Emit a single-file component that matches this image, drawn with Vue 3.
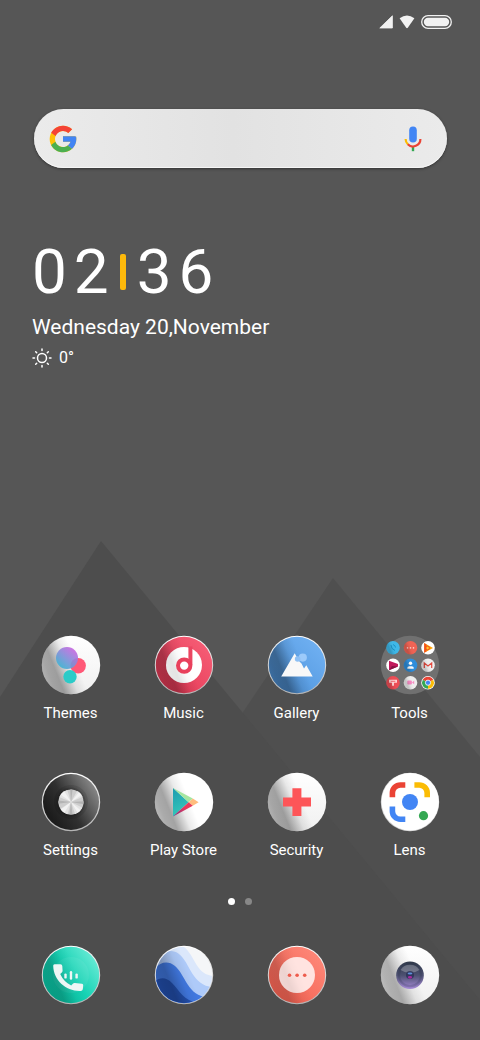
<template>
  <main class="home">
    <svg class="wallpaper" viewBox="0 0 480 520" preserveAspectRatio="none" aria-hidden="true">
      <path d="M333 58 L480 237 V520 H23 Z" fill="#4f4f4f" />
      <path d="M101 21 L480 480 V520 H0 V177 Z" fill="#4d4d4d" />
    </svg>

    <!-- Shared gradients and icon artwork -->
    <svg class="sprite" aria-hidden="true">
      <defs>
        <linearGradient id="shade" x1="0" y1="0.7" x2="0.85" y2="0.36">
          <stop offset="0" stop-color="#000" stop-opacity="0.26" />
          <stop offset="0.14" stop-color="#000" stop-opacity="0.33" />
          <stop offset="0.28" stop-color="#000" stop-opacity="0.36" />
          <stop offset="0.4" stop-color="#000" stop-opacity="0.22" />
          <stop offset="0.52" stop-color="#000" stop-opacity="0.08" />
          <stop offset="0.7" stop-color="#000" stop-opacity="0" />
        </linearGradient>
        <linearGradient id="rim" x1="0" y1="0" x2="0" y2="1">
          <stop offset="0" stop-color="#fff" />
          <stop offset="1" stop-color="#b4b4b4" />
        </linearGradient>
        <linearGradient id="pearl" x1="0" y1="0" x2="0" y2="1">
          <stop offset="0" stop-color="#fff" />
          <stop offset="1" stop-color="#f0f0f0" />
        </linearGradient>
        <linearGradient id="violet" x1="0.8" y1="0" x2="0.1" y2="0.9">
          <stop offset="0" stop-color="#d05fe0" />
          <stop offset="1" stop-color="#36b8d4" />
        </linearGradient>
        <linearGradient id="music-red" x1="0" y1="1" x2="1" y2="0">
          <stop offset="0" stop-color="#e23350" />
          <stop offset="1" stop-color="#f8627a" />
        </linearGradient>
        <linearGradient id="sky" x1="0" y1="1" x2="1" y2="0">
          <stop offset="0" stop-color="#4a90d8" />
          <stop offset="1" stop-color="#74b4f5" />
        </linearGradient>
        <linearGradient id="coal" x1="0.1" y1="0.7" x2="0.9" y2="0.2">
          <stop offset="0" stop-color="#1c1c1c" />
          <stop offset="0.4" stop-color="#303030" />
          <stop offset="1" stop-color="#858585" />
        </linearGradient>
        <linearGradient id="mint" x1="0.1" y1="0.8" x2="0.9" y2="0.2">
          <stop offset="0" stop-color="#08c2a2" />
          <stop offset="0.5" stop-color="#16d2b4" />
          <stop offset="1" stop-color="#62e9d3" />
        </linearGradient>
        <linearGradient id="coral" x1="0" y1="1" x2="1" y2="0">
          <stop offset="0" stop-color="#f25a4a" />
          <stop offset="1" stop-color="#ff8d7e" />
        </linearGradient>
        <linearGradient id="play-teal" x1="0" y1="0" x2="0.3" y2="1">
          <stop offset="0" stop-color="#1d9bb0" />
          <stop offset="1" stop-color="#35c7b9" />
        </linearGradient>
        <linearGradient id="play-red" x1="0" y1="1" x2="1" y2="0">
          <stop offset="0" stop-color="#742a86" />
          <stop offset="0.6" stop-color="#e73a5b" />
        </linearGradient>
        <linearGradient id="lens-glass" x1="0" y1="0" x2="0" y2="1">
          <stop offset="0" stop-color="#303a4a" />
          <stop offset="0.5" stop-color="#4c5070" />
          <stop offset="1" stop-color="#a78bd8" />
        </linearGradient>
        <clipPath id="globe"><circle cx="30" cy="30" r="28.2" /></clipPath>
        <clipPath id="knob"><circle cx="30" cy="30" r="12.6" /></clipPath>

        <symbol id="themes" viewBox="0 0 60 60">
          <circle cx="30" cy="30" r="29.2" fill="url(#pearl)" />
          <circle cx="30" cy="30" r="29.2" fill="url(#shade)" />
          <circle cx="37.2" cy="30.8" r="7.7" fill="#ff5877" />
          <circle cx="26" cy="23" r="11" fill="url(#violet)" fill-opacity="0.9" />
          <circle cx="29" cy="41.8" r="6.7" fill="#2bcbc8" />
        </symbol>

        <symbol id="music" viewBox="0 0 60 60">
          <circle cx="30" cy="30" r="29.2" fill="url(#rim)" />
          <circle cx="30" cy="30" r="28.2" fill="url(#music-red)" />
          <circle cx="30" cy="30" r="28.2" fill="url(#shade)" opacity="0.8" />
          <circle cx="30" cy="30" r="18" fill="#fff" />
          <circle cx="30" cy="30" r="18" fill="url(#shade)" opacity="0.3" />
          <path d="M34.4 11.5 H38.4 V30 H34.4 Z" fill="#eb4661" />
          <circle cx="30.2" cy="30.6" r="6.2" fill="#fff" stroke="#e9405c" stroke-width="4" />
        </symbol>

        <symbol id="gallery" viewBox="0 0 60 60">
          <circle cx="30" cy="30" r="29.2" fill="url(#rim)" />
          <circle cx="30" cy="30" r="28.2" fill="url(#sky)" />
          <circle cx="30" cy="30" r="28.2" fill="url(#shade)" />
          <path d="M14.2 41.4 L27.7 18.2 L29.5 21.5 L31 25 L34.5 28.5 L37 33.4 L39.3 30.3 L45.7 41.4 Z" fill="#f8f8f8" />
          <circle cx="35.8" cy="22.6" r="4.1" fill="#9ccafa" />
          <circle cx="30.6" cy="24" r="2.8" fill="#8dc0f5" />
        </symbol>

        <symbol id="tools" viewBox="0 0 60 60">
          <circle cx="30" cy="30" r="29.2" fill="#707070" />
          <g>
            <circle cx="13" cy="12.7" r="6.8" fill="#3fb8e8" />
            <path d="M11 10 q0 4 4 5.5 M13 9.5 q2.5 1 2.5 3" fill="none" stroke="#1b93c6" stroke-width="1" />
            <circle cx="30.5" cy="12.7" r="6.8" fill="#ef6354" />
            <circle cx="27.5" cy="12.9" r="0.8" fill="#ffd0ca" />
            <circle cx="30.5" cy="12.9" r="0.8" fill="#ffd0ca" />
            <circle cx="33.5" cy="12.9" r="0.8" fill="#ffd0ca" />
            <circle cx="48" cy="12.7" r="6.8" fill="#fff" />
            <path d="M44.2 8 L53 13 L44.2 17.8 Z" fill="#ffa000" />
            <path d="M44.2 8 L46.5 9.4 V16.5 L44.2 17.8 Z" fill="#f4511e" />
            <circle cx="47.6" cy="13" r="1.8" fill="#ffca28" stroke="#f4511e" stroke-width="1" />
          </g>
          <g>
            <circle cx="13" cy="30.3" r="6.8" fill="#fff" />
            <path d="M9 25.8 L18 29 V31.5 L9 35.2 Z" fill="#c2185b" />
            <path d="M9 35.2 L12 31 L18 31.5 Z" fill="#851243" />
            <circle cx="30.5" cy="30.3" r="6.8" fill="#2f8edb" />
            <circle cx="30.5" cy="28.3" r="1.7" fill="#fff" />
            <path d="M27.3 33.8 v-1 q0-1.6 2-1.6 h2.4 q2 0 2 1.6 v1 Z" fill="#fff" />
            <circle cx="48" cy="30.3" r="6.8" fill="#eee" />
            <path d="M44.3 33 V28 L48 31 L51.7 28 V33" fill="none" stroke="#e5483d" stroke-width="1.2" />
          </g>
          <g>
            <circle cx="13" cy="47.7" r="6.8" fill="#ed4e56" />
            <path d="M9 44.7 h8 v3 h-3 v3 h-2 v-3 h-3 Z" fill="#ffd4d4" />
            <path d="M10.7 46.3 h4.6" stroke="#ed4e56" stroke-width="0.8" />
            <circle cx="30.5" cy="47.7" r="6.8" fill="#eee" />
            <rect x="27.3" y="45.5" width="4.6" height="4" rx="1" fill="#f78cc4" />
            <path d="M32 47.5 l2.2-1.7 v3.4 Z" fill="#f78cc4" />
            <circle cx="48" cy="47.7" r="6.8" fill="#fff" />
            <path d="M48 47.7 L42.8 44.7 A6 6 0 0 1 53.2 44.7 Z" fill="#ea4335" />
            <path d="M48 47.7 L53.2 44.7 A6 6 0 0 1 48 53.7 Z" fill="#fbbc05" />
            <path d="M48 47.7 L48 53.7 A6 6 0 0 1 42.8 44.7 Z" fill="#34a853" />
            <circle cx="48" cy="47.7" r="2.6" fill="#4285f4" stroke="#fff" stroke-width="0.8" />
          </g>
          <circle v-for="n in 6" :key="n" :cx="shaded[n - 1][0]" :cy="shaded[n - 1][1]" r="6.8" fill="url(#shade)" opacity="0.5" />
        </symbol>

        <symbol id="settings" viewBox="0 0 60 60">
          <circle cx="30" cy="30" r="29.2" fill="url(#rim)" />
          <circle cx="30" cy="30" r="28" fill="url(#coal)" />
          <circle cx="30" cy="30" r="17" fill="#000" fill-opacity="0.1" />
          <circle cx="30" cy="30" r="14.5" fill="#000" fill-opacity="0.12" />
          <g clip-path="url(#knob)">
            <circle cx="30" cy="30" r="13" fill="#cdcdcd" />
            <path d="M30 30 L16 24 V12 L25 14 Z M30 30 L40 12 L48 22 Z M30 30 L46 38 L36 48 Z M30 30 L25 48 L14 40 Z" fill="#e2e2e2" />
            <path d="M30 30 L16 20 L20 14 Z M30 30 L43 14 L47 19 Z M30 30 L44 42 L40 46 Z M30 30 L20 46 L15 41 Z" fill="#f2f2f2" />
            <path d="M30 30 L29 14 H32 Z M30 30 L48 29 V33 Z M30 30 L28 46 H32 Z M30 30 L14 28 V32 Z" fill="#b4b4b4" />
          </g>
        </symbol>

        <symbol id="play-store" viewBox="0 0 60 60">
          <circle cx="30" cy="30" r="29.2" fill="#fff" />
          <circle cx="30" cy="30" r="29.2" fill="url(#shade)" />
          <path d="M19 16 L34.6 30.3 L19 44.4 Z" fill="url(#play-teal)" />
          <path d="M19 16 L38.8 26.5 L34.6 30.3 Z" fill="#a5e6a0" />
          <path d="M38.8 26.5 L44.6 30.3 L38.8 33.8 L34.6 30.3 Z" fill="#ffbd7e" />
          <path d="M19 44.4 L34.6 30.3 L38.8 33.8 Z" fill="url(#play-red)" />
        </symbol>

        <symbol id="security" viewBox="0 0 60 60">
          <circle cx="30" cy="30" r="29.2" fill="url(#pearl)" />
          <circle cx="30" cy="30" r="29.2" fill="url(#shade)" />
          <path d="M25.4 16.2 H34.4 V25.6 H44 V34.4 H34.4 V44 H25.4 V34.4 H16 V25.6 H25.4 Z" fill="#fd5558" />
        </symbol>

        <symbol id="lens" viewBox="0 0 60 60">
          <circle cx="30" cy="30" r="29.2" fill="#cfcfcf" />
          <circle cx="30.2" cy="29.8" r="28.7" fill="#fff" />
          <g fill="none" stroke-width="5.6">
            <path d="M12.4 25.3 V21 A8 8 0 0 1 20.4 13 H25.3" stroke="#ea4335" />
            <path d="M34.4 13 H39.2 A8 8 0 0 1 47.2 21 V25.3" stroke="#fbbc05" />
            <path d="M12.4 34.4 V39.2 A8 8 0 0 0 20.4 47.2 H25.3" stroke="#4285f4" />
          </g>
          <circle cx="30" cy="30" r="8" fill="#4285f4" />
          <circle cx="43.5" cy="43.7" r="4.6" fill="#34a853" />
        </symbol>

        <symbol id="phone" viewBox="0 0 60 60">
          <circle cx="30" cy="30" r="29.2" fill="url(#rim)" />
          <circle cx="30" cy="30" r="28.2" fill="url(#mint)" />
          <circle cx="30" cy="30" r="18" fill="#fff" fill-opacity="0.06" />
          <circle cx="30" cy="30" r="28.2" fill="url(#shade)" opacity="0.6" />
          <path d="M13.5 19.3 H19.4 Q21.2 19.3 21.3 21 L21.6 25.8 Q21.6 27 20.6 27.8 L19.2 29 Q22.5 36.5 30.2 40.6 L31.6 39 Q32.6 38 33.8 38.1 L41 38.7 Q42.3 38.9 42.2 40.2 L41.8 44.2 Q41.5 45.9 39.7 46 C25 46.5 12.6 35.5 12.2 20.8 Q12.2 19.3 13.5 19.3 Z" fill="#eef6f5" />
          <g stroke="#eef6f5" stroke-width="2.4" stroke-linecap="round">
            <path d="M24.5 29.6 V32.4" />
            <path d="M30 27.3 V33.6" />
            <path d="M35.6 29.6 V32.4" />
          </g>
        </symbol>

        <symbol id="earth" viewBox="0 0 60 60">
          <circle cx="30" cy="30" r="29.2" fill="url(#rim)" />
          <g clip-path="url(#globe)">
            <rect width="60" height="60" fill="#f5f6f8" />
            <path d="M0 8 C12 -2 27 -4 34 6 C42 16 44 30 60 31 V60 H0 Z" fill="#dbe7fb" />
            <path d="M0 15 C8 7 17 3 25 9 C36 17 38 42 60 42 V60 H0 Z" fill="#aecaf9" />
            <path d="M0 24 C6 17 14 15 21 21 C31 29 34 52 54 52 V60 H0 Z" fill="#4179e2" />
            <path d="M0 37 C6 32 12 32 18 38 C25 45 30 56 44 58 V60 H0 Z" fill="#2351b2" />
            <circle cx="30" cy="30" r="28.2" fill="url(#shade)" opacity="0.75" />
          </g>
        </symbol>

        <symbol id="messages" viewBox="0 0 60 60">
          <circle cx="30" cy="30" r="29.2" fill="url(#rim)" />
          <circle cx="30" cy="30" r="28.2" fill="url(#coral)" />
          <circle cx="30" cy="30" r="28.2" fill="url(#shade)" opacity="0.5" />
          <circle cx="30" cy="30" r="18" fill="#ffe3e0" />
          <circle cx="30" cy="30" r="18" fill="url(#shade)" opacity="0.2" />
          <g fill="#ee5c4d">
            <circle cx="22.5" cy="30.3" r="1.8" />
            <circle cx="30.1" cy="30.3" r="1.8" />
            <circle cx="37.7" cy="30.3" r="1.8" />
          </g>
        </symbol>

        <symbol id="camera" viewBox="0 0 60 60">
          <circle cx="30" cy="30" r="29.2" fill="url(#pearl)" />
          <circle cx="30" cy="30" r="29.2" fill="url(#shade)" opacity="0.85" />
          <circle cx="30" cy="30.2" r="13.8" fill="url(#lens-glass)" />
          <circle cx="30" cy="30.2" r="11" fill="none" stroke="#252b48" stroke-opacity="0.2" stroke-width="2" />
          <path d="M20.5 25 A10.5 9 0 0 1 39.5 25 Q30 31 20.5 25 Z" fill="#fff" fill-opacity="0.25" />
          <circle cx="30" cy="30" r="4" fill="#293058" fill-opacity="0.8" />
          <ellipse cx="30" cy="28.5" rx="2.4" ry="1.1" fill="#5f90d8" />
          <ellipse cx="30" cy="32.3" rx="2.2" ry="1.4" fill="#a52a9c" />
        </symbol>
      </defs>
    </svg>

    <header class="status-bar">
      <svg width="14" height="14" viewBox="0 0 14 14" role="img" aria-label="Signal">
        <path d="M13.4 0.8 V13 H0.8 Z" fill="#f2f2f2" stroke="#f2f2f2" stroke-width="0.8" stroke-linejoin="round" />
      </svg>
      <svg width="16" height="14" viewBox="0 0 16 14" role="img" aria-label="Wi-Fi">
        <path d="M0.6 3.2 Q8 -2.4 15.4 3.2 L8.8 12.7 Q8 13.6 7.2 12.7 Z" fill="#f2f2f2" />
      </svg>
      <svg width="31" height="14" viewBox="0 0 31 14" role="img" aria-label="Battery">
        <rect x="0.7" y="0.7" width="29.6" height="12.6" rx="6.3" fill="none" stroke="#f2f2f2" stroke-width="1.3" />
        <rect x="2.8" y="2.8" width="25.4" height="8.4" rx="4.2" fill="#f2f2f2" />
      </svg>
    </header>

    <form class="search" role="search" @submit.prevent>
      <svg width="32" height="32" viewBox="0 0 48 48" aria-hidden="true">
        <path fill="#ffc107" d="M43.6 20.1H42V20H24v8h11.3C33.7 32.7 29.2 36 24 36c-6.6 0-12-5.4-12-12s5.4-12 12-12c3.1 0 5.8 1.2 8 3l5.7-5.7C34 6.1 29.3 4 24 4 13 4 4 13 4 24s9 20 20 20 20-9 20-20c0-1.3-.1-2.6-.4-3.9z" />
        <path fill="#f44336" d="M6.3 14.7l6.6 4.8C14.7 15.1 19 12 24 12c3.1 0 5.8 1.2 8 3l5.7-5.7C34 6.1 29.3 4 24 4 16.3 4 9.7 8.3 6.3 14.7z" />
        <path fill="#4caf50" d="M24 44c5.2 0 9.9-2 13.4-5.2l-6.2-5.2C29.2 35.1 26.7 36 24 36c-5.2 0-9.6-3.3-11.3-8l-6.5 5C9.5 39.6 16.2 44 24 44z" />
        <path fill="#4285f4" d="M43.6 20.1H42V20H24v8h11.3c-.8 2.2-2.2 4.2-4.1 5.6l6.2 5.2C37 39.2 44 34 44 24c0-1.3-.1-2.6-.4-3.9z" />
      </svg>
      <input v-model="query" type="text" aria-label="Search" />
      <button type="button" class="mic" aria-label="Voice search">
        <svg width="18" height="26" viewBox="0 0 18 26" aria-hidden="true">
          <rect x="5.2" y="0.6" width="7.6" height="16" rx="3.8" fill="#4285f4" />
          <path d="M7.8 20 H10.2 V25.2 H7.8 Z" fill="#34a853" />
          <path d="M1.6 13 A7.4 7.4 0 0 0 4 18.4" fill="none" stroke="#fbbc05" stroke-width="2.2" />
          <path d="M3.8 18.3 A7.4 7.4 0 0 0 16.4 13" fill="none" stroke="#ea4335" stroke-width="2.2" />
        </svg>
      </button>
    </form>

    <section class="clock">
      <div class="time">
        <span>0</span>
        <span>2</span>
        <i class="divider"></i>
        <span>3</span>
        <span>6</span>
      </div>
      <div class="date">Wednesday 20,November</div>
      <div class="weather">
        <svg width="20" height="20" viewBox="0 0 20 20" fill="none" stroke="#fff" stroke-width="1.5" stroke-linecap="round" role="img" aria-label="Sunny">
          <circle cx="10" cy="10" r="4.5" />
          <path d="M10 1 V2.5 M10 17.5 V19 M1 10 H2.5 M17.5 10 H19 M3.7 3.7 L4.7 4.7 M15.3 15.3 L16.3 16.3 M3.7 16.3 L4.7 15.3 M15.3 4.7 L16.3 3.7" />
        </svg>
        <span>0°</span>
      </div>
    </section>

    <section class="apps">
      <button v-for="app in apps" :key="app.id" type="button" class="app">
        <svg class="icon" aria-hidden="true"><use :href="'#' + app.id" /></svg>
        <span class="label">{{ app.name }}</span>
      </button>
    </section>

    <nav class="pages" aria-label="Pages">
      <button
        v-for="n in 2"
        :key="n"
        type="button"
        class="dot"
        :class="{ active: page === n }"
        :aria-label="'Page ' + n"
        @click="page = n"
      ></button>
    </nav>

    <footer class="dock">
      <button v-for="app in dock" :key="app.id" type="button" class="app" :aria-label="app.name">
        <svg class="icon" aria-hidden="true"><use :href="'#' + app.id" /></svg>
      </button>
    </footer>
  </main>
</template>

<script setup>
import { ref } from 'vue'

const query = ref('')
const page = ref(1)

const apps = [
  { id: 'themes', name: 'Themes' },
  { id: 'music', name: 'Music' },
  { id: 'gallery', name: 'Gallery' },
  { id: 'tools', name: 'Tools' },
  { id: 'settings', name: 'Settings' },
  { id: 'play-store', name: 'Play Store' },
  { id: 'security', name: 'Security' },
  { id: 'lens', name: 'Lens' }
]

const dock = [
  { id: 'phone', name: 'Phone' },
  { id: 'earth', name: 'Earth' },
  { id: 'messages', name: 'Messages' },
  { id: 'camera', name: 'Camera' }
]

// folder miniatures that get the ball shading
const shaded = [[13, 12.7], [30.5, 12.7], [30.5, 30.3], [48, 30.3], [13, 47.7], [30.5, 47.7]]
</script>

<style>
body {
  margin: 0;
  background: #565656;
}
</style>

<style scoped>
.home {
  position: relative;
  z-index: 0;
  box-sizing: border-box;
  min-height: 100vh;
  padding-bottom: 35px;
  display: flex;
  flex-direction: column;
  font-family: Roboto, sans-serif;
  color: #fff;
  background: #565656;
}

.wallpaper {
  position: absolute;
  z-index: -1;
  left: 0;
  bottom: 0;
  width: 100%;
  height: 50%;
}

.sprite {
  position: absolute;
  width: 0;
  height: 0;
}

button {
  padding: 0;
  border: 0;
  background: none;
  font: inherit;
  color: inherit;
  cursor: pointer;
}

.status-bar {
  display: flex;
  justify-content: flex-end;
  align-items: center;
  gap: 6px;
  height: 43px;
  padding: 0 28px;
}

.search {
  display: flex;
  align-items: center;
  box-sizing: border-box;
  height: 59px;
  margin: 66px 33px 0 34px;
  padding: 0 25px 0 13px;
  border-radius: 30px;
  background: linear-gradient(90deg, #ebebeb, #e2e2e2 48%, #ebebeb);
  box-shadow: 0 1px 3px rgba(0, 0, 0, 0.4), inset 0 -1px 0 #f6f6f6;
}

.search input {
  flex: 1;
  min-width: 0;
  height: 40px;
  border: 0;
  outline: 0;
  background: none;
  font: inherit;
  font-size: 18px;
  color: #333;
}

.mic {
  display: flex;
}

.clock {
  margin-top: 68px;
  padding: 0 32px;
}

.time {
  display: flex;
  align-items: center;
  gap: 7px;
  font-size: 62px;
  line-height: 72px;
}

.divider {
  width: 6px;
  height: 36px;
  margin: 0 4px;
  border-radius: 2px;
  background: #fdb90b;
}

.date {
  margin-top: 6px;
  font-size: 21px;
  line-height: 26px;
}

.weather {
  display: flex;
  align-items: center;
  gap: 7px;
  margin-top: 8px;
  font-size: 16px;
  line-height: 20px;
}

.apps,
.dock {
  display: grid;
  grid-template-columns: repeat(4, 1fr);
  padding: 0 14px;
}

.apps {
  row-gap: 48px;
  margin-top: auto;
}

.app {
  display: flex;
  flex-direction: column;
  align-items: center;
  gap: 7px;
}

.icon {
  width: 60px;
  height: 60px;
}

.label {
  font-size: 15px;
  line-height: 22px;
}

.pages {
  display: flex;
  justify-content: center;
  gap: 10px;
  margin: 37px 0 40px;
}

.dot {
  width: 7px;
  height: 7px;
  border-radius: 50%;
  background: #888;
}

.dot.active {
  background: #fff;
}
</style>
